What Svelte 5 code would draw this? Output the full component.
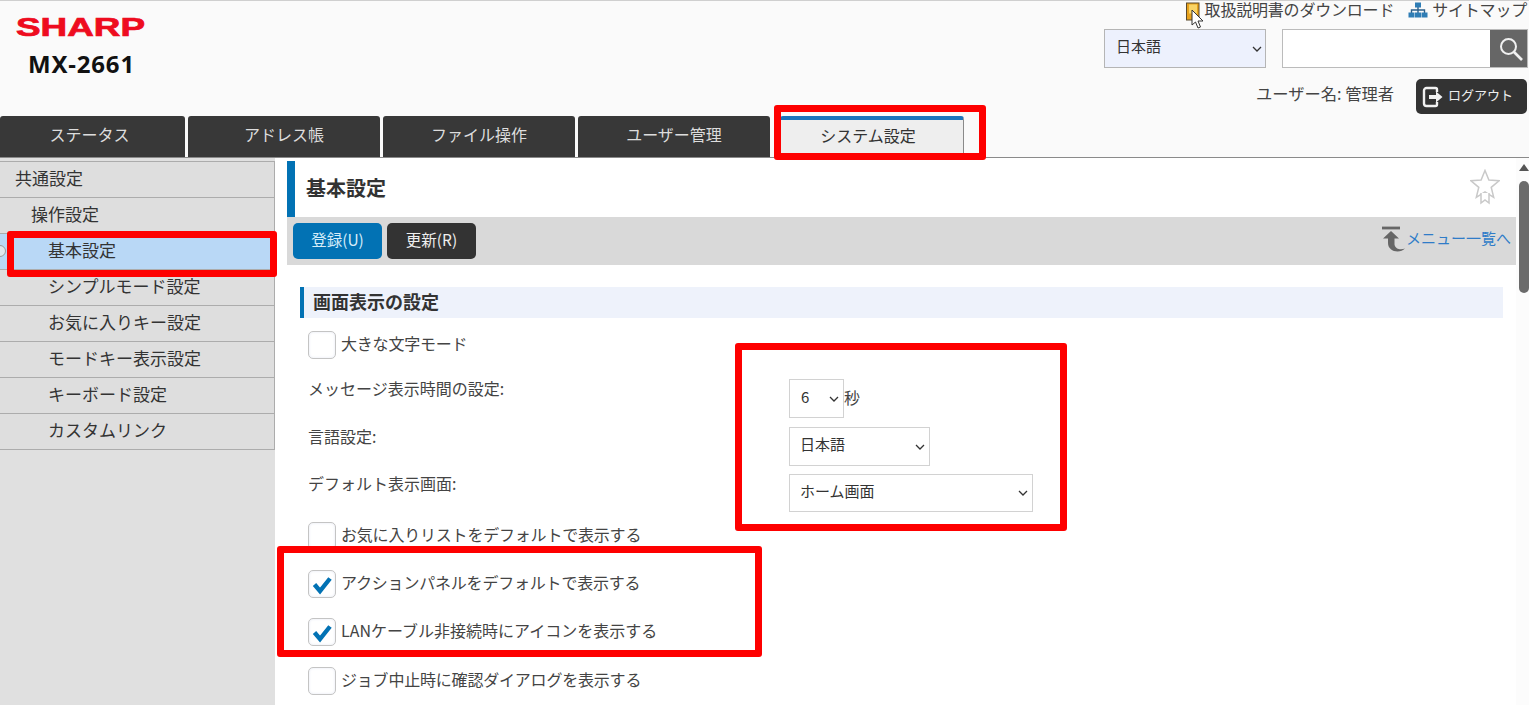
<script lang="ts">
  const tabs = ["ステータス", "アドレス帳", "ファイル操作", "ユーザー管理"];
  const sideItems = ["シンプルモード設定", "お気に入りキー設定", "モードキー表示設定", "キーボード設定", "カスタムリンク"];
</script>

{#snippet checkRow(label: string, checked: boolean, cls: string)}
  <label class="check-row {cls}">
    <span class="box">
      {#if checked}
        <svg viewBox="0 0 28 28" width="28" height="28"><path d="M6.5 14.5l5.5 6.5L22 8.5" fill="none" stroke="#0272b4" stroke-width="4.4" /></svg>
      {/if}
    </span>
    <span class="check-text">{label}</span>
  </label>
{/snippet}

<div class="page">
  <header class="top">
    <div class="brand">
      <svg class="logo" viewBox="0 -6 150 30" width="150" height="30" role="img" aria-label="SHARP">
        <text x="0" y="18.500" textLength="129" lengthAdjust="spacingAndGlyphs" font-size="25" font-weight="700" font-family="Liberation Sans, sans-serif" fill="#ee0c1f" stroke="#ee0c1f" stroke-width="0.7">SHARP</text>
      </svg>
      <div class="model">MX-2661</div>
    </div>
    <div class="tools">
      <div class="links">
        <span class="link">
          <svg viewBox="0 0 14 19" width="14" height="19"><rect x="0.5" y="1" width="12.500" height="17" fill="#e8a21c" stroke="#5b4a2c" /><rect x="3" y="2.500" width="8" height="9" fill="#f9d466" /></svg>
          取扱説明書のダウンロード
        </span>
        <span class="link site">
          <svg viewBox="0 0 20 16" width="20" height="16"><path d="M10 4v4M3.500 11V8h13v3M10 8v3" fill="none" stroke="#2b5f8a" stroke-width="1.400" /><rect x="7" y="0.500" width="6" height="5" fill="#2f7db5" /><rect x="0.500" y="10.500" width="6" height="5" fill="#2f7db5" /><rect x="7" y="10.500" width="6" height="5" fill="#2f7db5" /><rect x="13.500" y="10.500" width="6" height="5" fill="#2f7db5" /></svg>
          サイトマップ
        </span>
      </div>
      <div class="search-row">
        <select class="lang"><option>日本語</option></select>
        <div class="search">
          <input type="text" />
          <button class="search-btn" aria-label="検索">
            <svg viewBox="0 0 28 28" width="28" height="28"><circle cx="11.500" cy="11.500" r="7.500" fill="none" stroke="#f0f0f0" stroke-width="2" /><path d="M17 17l8 8" stroke="#f0f0f0" stroke-width="2.600" /></svg>
          </button>
        </div>
      </div>
      <div class="user-row">
        <span class="user">ユーザー名: 管理者</span>
        <button class="logout">
          <svg viewBox="0 0 22 22" width="22" height="22"><path d="M15 6V3.500a1.500 1.500 0 0 0-1.500-1.500h-9A2.500 2.500 0 0 0 2 4.500v13A2.500 2.500 0 0 0 4.500 20h9a1.500 1.500 0 0 0 1.500-1.500V16" fill="none" stroke="#f2f2f2" stroke-width="2.400" /><path d="M7 9h7V5.500l6.500 5.500-6.500 5.500V13H7z" fill="#f2f2f2" /></svg>
          <span class="logout-text">ログアウト</span>
        </button>
      </div>
    </div>
  </header>

  <nav class="tabs">
    {#each tabs as tab}
      <div class="tab">{tab}</div>
    {/each}
    <div class="tab active">システム設定</div>
  </nav>

  <div class="body">
    <aside class="side">
      <div class="side-item">共通設定</div>
      <div class="side-item lv2">操作設定</div>
      <div class="side-item lv3 current"><span class="pin"></span>基本設定</div>
      {#each sideItems as item}
        <div class="side-item lv3">{item}</div>
      {/each}
    </aside>

    <main class="main">
      <div class="title">
        <h1>基本設定</h1>
        <svg class="star" viewBox="0 0 30 36" width="30" height="36"><path d="M15 1.500l3.900 9.600 10.100.700-7.800 6.500 2.500 10-8.700-5.400-8.700 5.400 2.500-10L1 11.800l10.100-.700z" fill="#fff" stroke="#c9c9c9" stroke-width="1.500" /><path d="M11 24v10l4-3 4 3V24" fill="#fff" stroke="#c9c9c9" stroke-width="1.500" /></svg>
      </div>
      <div class="toolbar">
        <button class="btn primary">登録(U)</button>
        <button class="btn">更新(R)</button>
        <span class="back">
          <svg viewBox="0 0 25 26" width="25" height="26"><path d="M1 2h18" stroke="#666" stroke-width="2.800" /><path d="M10 5L2 12.500h5V17c0 5.500 4.500 8.500 9.500 8.500 3 0 5.500-1 7.500-3-4 1.500-9.500 1-10.500-4v-6H18z" fill="#666" /></svg>
          <span class="back-text">メニュー一覧へ</span>
        </span>
      </div>

      <section class="form">
        <h2>画面表示の設定</h2>
        {@render checkRow("大きな文字モード", false, "first")}
        <div class="field f1">
          <span class="field-label">メッセージ表示時間の設定:</span>
          <span class="control"><select class="s-sec"><option>6</option></select><span class="unit">秒</span></span>
        </div>
        <div class="field f2">
          <span class="field-label">言語設定:</span>
          <span class="control"><select class="s-lang"><option>日本語</option></select></span>
        </div>
        <div class="field f3">
          <span class="field-label">デフォルト表示画面:</span>
          <span class="control"><select class="s-home"><option>ホーム画面</option></select></span>
        </div>
        {@render checkRow("お気に入りリストをデフォルトで表示する", false, "after")}
        {@render checkRow("アクションパネルをデフォルトで表示する", true, "")}
        {@render checkRow("LANケーブル非接続時にアイコンを表示する", true, "lan")}
        {@render checkRow("ジョブ中止時に確認ダイアログを表示する", false, "last")}
      </section>
    </main>

    <div class="scrollbar">
      <span class="arrow"></span>
      <span class="thumb"></span>
    </div>
  </div>

  <!-- annotation boxes drawn over the page -->
  <div class="mark m-tab"></div>
  <div class="mark m-side"></div>
  <div class="mark m-select"></div>
  <div class="mark m-check"></div>

  <svg class="cursor" viewBox="0 0 14 20" width="14" height="20"><path d="M1 1v15l3.500-3 2.500 6 2.500-1-2.500-6H12z" fill="#fff" stroke="#333" stroke-width="1" /></svg>
</div>

<style>
  :global(body) {
    margin: 0;
    background: #fff;
    font-family: "Noto Sans CJK JP", "Noto Sans", sans-serif;
    color: #333;
  }

  .page {
    position: relative;
    height: 705px;
    overflow: hidden;
  }

  .top {
    height: 115px;
    display: flex;
    justify-content: space-between;
    background: #fafafa;
    border-top: 1px solid #cfcfcf;
  }

  .brand {
    padding: 10px 0 0 16px;
  }

  .logo {
    display: block;
  }

  .model {
    margin: 8px 0 0 12px;
    font-family: "Noto Sans", sans-serif;
    font-weight: 700;
    font-size: 24px;
    line-height: 30px;
    letter-spacing: 0.8px;
    color: #111;
  }

  .tools {
    display: flex;
    flex-direction: column;
    align-items: flex-end;
    padding-right: 1px;
  }

  .links {
    display: flex;
    gap: 14px;
    height: 28px;
    padding-right: 1px;
    font-size: 16px;
    line-height: 17px;
    letter-spacing: -0.2px;
    color: #444;
  }

  .link {
    display: flex;
    align-items: flex-start;
    gap: 5px;
  }

  .link.site {
    gap: 4px;
  }

  .link svg {
    margin-top: 1px;
  }

  select {
    appearance: none;
    background-image: url("data:image/svg+xml,%3Csvg xmlns='http://www.w3.org/2000/svg' width='10' height='6'%3E%3Cpath d='M1 1l4 4 4-4' fill='none' stroke='%23333' stroke-width='1.300'/%3E%3C/svg%3E");
    background-repeat: no-repeat;
    background-position: right 4px center;
  }

  .search-row {
    display: flex;
    gap: 16px;
  }

  .lang {
    width: 162px;
    height: 39px;
    padding: 0 0 6px 11px;
    background-color: #edf1fd;
    background-position: right 3px center;
    border: 1px solid #b5b5b5;
    border-radius: 0;
    font: 15px "Noto Sans CJK JP", sans-serif;
    color: #333;
  }

  .search {
    display: flex;
    width: 246px;
    height: 39px;
    box-sizing: border-box;
    border: 1px solid #bbb;
  }

  .search input {
    flex: 1;
    min-width: 0;
    border: 0;
    padding: 0;
    background: #fff;
  }

  .search-btn {
    width: 37px;
    padding: 4px 0 0 5px;
    border: 0;
    background: #666;
  }

  .user-row {
    display: flex;
    align-items: center;
    gap: 22px;
    margin-top: 11px;
  }

  .user {
    padding-bottom: 7px;
    font-size: 16.300px;
    color: #444;
  }

  .logout {
    display: flex;
    align-items: center;
    gap: 4px;
    width: 111px;
    height: 35px;
    margin-right: 1px;
    padding: 0 0 0 6px;
    border: 0;
    border-radius: 5px;
    background: #333;
    color: #eee;
    font: 13px "Noto Sans CJK JP", sans-serif;
    white-space: nowrap;
  }

  .logout-text {
    padding-bottom: 5px;
  }

  .tabs {
    display: flex;
    gap: 3px;
    height: 41px;
    background: #fafafa;
    border-bottom: 1px solid #8a8a8a;
  }

  .tab {
    width: 192px;
    border-radius: 3px 3px 0 0;
    background: #383838;
    color: #ddd;
    font-size: 16px;
    line-height: 37px;
    text-align: center;
  }

  .tab:first-child {
    width: 185px;
    box-sizing: border-box;
    padding-right: 6px;
  }

  .tab.active {
    width: 184px;
    height: 39px;
    margin-left: 7px;
    padding-right: 8px;
    box-sizing: border-box;
    background: #eeeeee;
    border: 1px solid #8a8a8a;
    border-top: 4px solid #1c75bc;
    color: #333;
    line-height: 30px;
  }

  .body {
    display: flex;
    height: 547px;
    background: #fff;
  }

  .side {
    width: 275px;
    flex: none;
    padding-top: 3px;
    background: #e0e0e0;
    box-sizing: border-box;
  }

  .side-item {
    position: relative;
    height: 36px;
    box-sizing: border-box;
    padding-left: 15px;
    background: #dedede;
    border: solid #acacac;
    border-width: 1px 1px 0 0;
    font-size: 17px;
    line-height: 31px;
    color: #333;
  }

  .side-item:last-child {
    height: 37px;
    border-bottom: 1px solid #acacac;
  }

  .lv2 {
    padding-left: 31px;
  }

  .lv3 {
    padding-left: 48px;
  }

  .current {
    background: #b9d8f6;
  }

  .pin {
    position: absolute;
    left: -6px;
    top: 11px;
    width: 10px;
    height: 10px;
    border: 1px solid #999;
    border-radius: 50%;
    background: #dfe7ee;
  }

  .main {
    flex: 1;
    min-width: 0;
    margin-left: 12px;
    padding-top: 3px;
  }

  .title {
    display: flex;
    align-items: center;
    justify-content: space-between;
    height: 56px;
    box-sizing: border-box;
    padding: 0 16px 0 11px;
    border-left: 8px solid #0272b4;
  }

  h1 {
    margin: 0;
    padding-bottom: 4px;
    font-size: 20px;
    font-weight: 700;
    color: #333;
  }

  .star {
    margin-bottom: 5px;
  }

  .toolbar {
    display: flex;
    align-items: center;
    gap: 5px;
    height: 48px;
    padding: 0 5px 0 6px;
    background: #d9d9d9;
  }

  .btn {
    width: 89px;
    height: 36px;
    padding: 0 0 5px;
    border: 0;
    border-radius: 5px;
    background: #333;
    color: #eee;
    font: 15.500px "Noto Sans CJK JP", sans-serif;
  }

  .btn.primary {
    background: #0272b4;
    color: #d5ecf8;
  }

  .back {
    display: flex;
    align-items: center;
    margin-left: auto;
    padding-bottom: 4px;
    font-size: 15px;
    color: #2f7cc8;
  }

  .back-text {
    padding-bottom: 4px;
  }

  .form {
    padding: 22px 13px 0 13px;
  }

  h2 {
    margin: 0;
    height: 31px;
    box-sizing: border-box;
    padding-left: 9px;
    border-left: 4px solid #0272b4;
    background: #eef2fb;
    font-size: 18px;
    font-weight: 700;
    line-height: 28px;
    color: #333;
  }

  .check-row {
    display: flex;
    align-items: center;
    gap: 5px;
    height: 28px;
    margin: 20px 0 0 8px;
    font-size: 16px;
    letter-spacing: -0.2px;
    color: #444;
  }

  .check-text {
    padding-bottom: 4px;
  }

  .check-row.first {
    margin-top: 13px;
  }

  .check-row.after {
    margin-top: 10px;
  }

  .check-row.lan {
    letter-spacing: 0;
  }

  .check-row.last {
    margin-top: 21px;
  }

  .box {
    width: 28px;
    height: 28px;
    flex: none;
    box-sizing: border-box;
    border: 1px solid #c4c4c4;
    border-radius: 5px;
    background: #fff;
    box-shadow: inset 0 0 3px #e4e8f2;
  }

  .box svg {
    display: block;
    margin: -1px;
  }

  .field {
    display: flex;
    margin-left: 8px;
    font-size: 16px;
    color: #444;
  }

  .field-label {
    width: 481px;
    flex: none;
    margin-top: -3px;
  }

  .control {
    display: flex;
    align-items: center;
    font-size: 15px;
  }

  .unit {
    padding-bottom: 4px;
    font-size: 16px;
  }

  .f1 {
    margin-top: 20px;
  }

  .f2 {
    margin-top: 9px;
  }

  .f3 {
    margin-top: 8px;
  }

  .control select {
    height: 39px;
    padding: 0 0 6px 10px;
    background-color: #fff;
    border: 1px solid #d2d2d2;
    border-radius: 0;
    font: 15px "Noto Sans CJK JP", sans-serif;
    color: #333;
  }

  .control .s-sec {
    width: 55px;
    padding-left: 11px;
    padding-bottom: 5px;
  }

  .s-lang {
    width: 141px;
  }

  .control .s-home {
    width: 244px;
    height: 38px;
  }

  .scrollbar {
    position: relative;
    width: 13px;
    flex: none;
    background: #fcfcfc;
  }

  .arrow {
    position: absolute;
    top: 6px;
    left: 3px;
    border: solid transparent;
    border-width: 0 5px 7px;
    border-bottom-color: #555;
  }

  .thumb {
    position: absolute;
    top: 23px;
    left: 3px;
    width: 10px;
    height: 112px;
    border-radius: 5px;
    background: #6b6b6b;
  }

  .mark {
    position: absolute;
    box-sizing: border-box;
    border: 7px solid #fe0000;
    border-radius: 3px;
  }

  .m-tab {
    left: 774px;
    top: 105px;
    width: 212px;
    height: 55px;
  }

  .m-side {
    left: 7px;
    top: 231px;
    width: 270px;
    height: 46px;
  }

  .m-select {
    left: 735px;
    top: 343px;
    width: 332px;
    height: 188px;
  }

  .m-check {
    left: 277px;
    top: 546px;
    width: 485px;
    height: 111px;
  }

  .cursor {
    position: absolute;
    left: 1191px;
    top: 9px;
  }
</style>
